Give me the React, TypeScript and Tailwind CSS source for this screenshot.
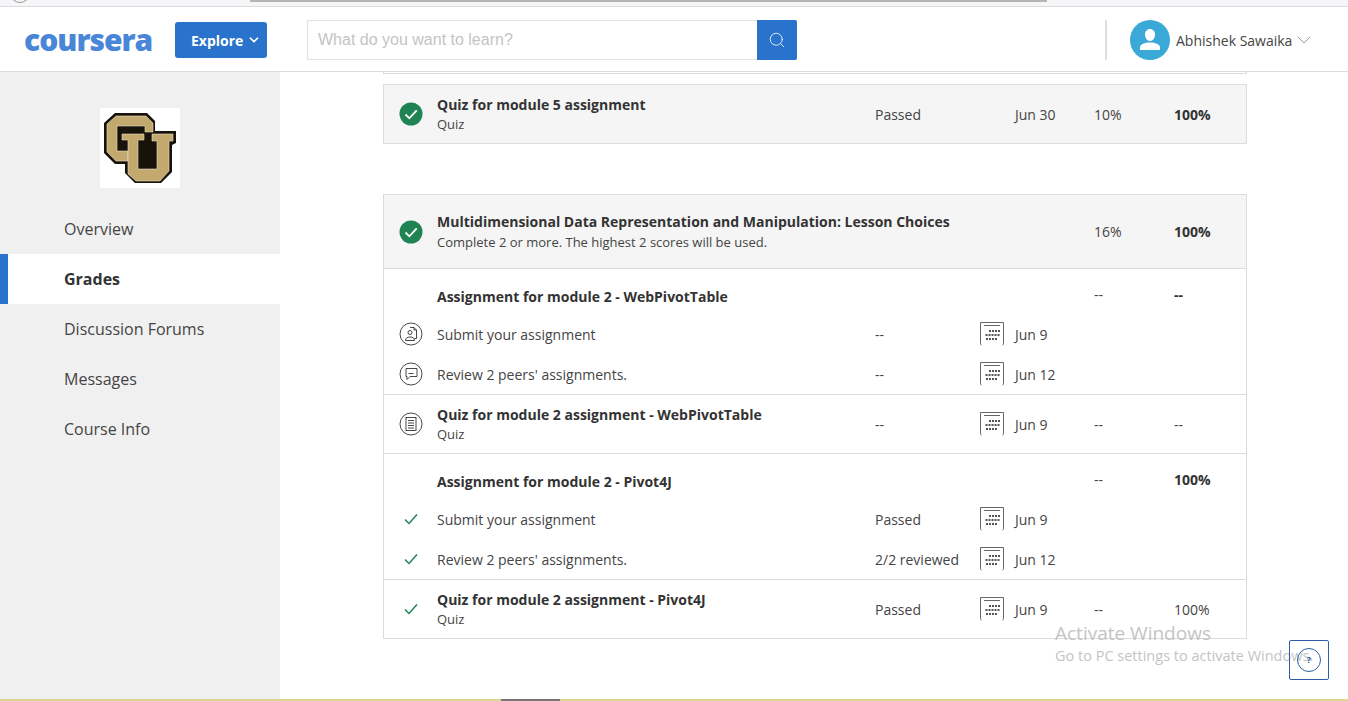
import type { ReactNode } from "react"
import { ChevronDown, Search } from "lucide-react"

function GreenCheck() {
  return (
    <svg width="24" height="24" viewBox="0 0 24 24">
      <circle cx="12" cy="12" r="11.5" fill="#1f8354" />
      <path d="M6.5 12.5l3.8 3.8 7.4-8" fill="none" stroke="#fff" strokeWidth="1.8" />
    </svg>
  )
}

function PlainCheck() {
  return (
    <svg width="24" height="24" viewBox="0 0 24 24">
      <path d="M6 12.5l4 4 8-9" fill="none" stroke="#1f8354" strokeWidth="1.5" />
    </svg>
  )
}

function SubmitIcon() {
  return (
    <svg width="24" height="24" viewBox="0 0 24 24" fill="none" stroke="#333" strokeWidth="0.9">
      <circle cx="12" cy="12" r="11" />
      <path d="M11 5.500h4l2.500 2.500v8.500h-2" />
      <path d="M15 5.500V8h2.500" />
      <circle cx="11" cy="10.500" r="2" />
      <path d="M6.500 18.500c0-2.500 2-3.500 4.500-3.500s4.500 1 4.500 3.500z" />
    </svg>
  )
}

function PeerIcon() {
  return (
    <svg width="24" height="24" viewBox="0 0 24 24" fill="none" stroke="#333" strokeWidth="0.9">
      <circle cx="12" cy="12" r="11" />
      <path d="M7 6.500h11v8h-7l-3 3v-3H7z" />
      <path d="M9.500 11.500h5" />
    </svg>
  )
}

function QuizIcon() {
  return (
    <svg width="24" height="24" viewBox="0 0 24 24" fill="none" stroke="#333" strokeWidth="0.9">
      <circle cx="12" cy="12" r="11" />
      <rect x="7" y="5.500" width="10" height="13" />
      <path d="M9 8.500h6M9 11h6M9 13.500h6M9 16h6" />
    </svg>
  )
}

function CalendarIcon() {
  const dots = [6, 9, 12, 15, 18]
  return (
    <svg width="24" height="24" viewBox="0 0 24 24" fill="none">
      <path d="M1.500 23c-1 0-1-1-1-2V0.500h23V21c0 1 0 2-1 2" stroke="#666" strokeWidth="1" />
      <path d="M4 3.500h16" stroke="#666" strokeWidth="1" />
      {dots.slice(1).map((x) => (
        <rect key={`a${x}`} x={x} y="8" width="2" height="2" fill="#555" />
      ))}
      {dots.map((x) => (
        <rect key={`b${x}`} x={x - 0.5} y="12" width="2" height="2" fill="#555" />
      ))}
      {dots.slice(0, 4).map((x) => (
        <rect key={`c${x}`} x={x} y="16" width="2" height="2" fill="#555" />
      ))}
    </svg>
  )
}

function CuLogo() {
  return (
    <svg width="80" height="80" viewBox="0 0 80 80">
      <path
        d="M15 5H47L55 13V23H76V35L72 37V64L61 75H35L25 65V56H15L4 45V15Z"
        fill="#17120a"
      />
      <path
        d="M16 8H46L53 15V24H45V18H17V43H28V53H16L7 44V16Z"
        fill="#c4a96f"
        stroke="#e8dfc6"
        strokeWidth="0.6"
      />
      <path
        d="M22 26H44V32H38V61H57V33H52V26H73V33H69V63L60 73H36L28 66V32H22Z"
        fill="#c4a96f"
        stroke="#e8dfc6"
        strokeWidth="0.6"
      />
    </svg>
  )
}

function NavItem({ label, active }: { label: string; active?: boolean }) {
  if (active) {
    return (
      <div className="flex h-[50px] items-center border-l-[8px] border-[#2a73cc] bg-white pl-[56px] text-[16px] font-bold text-[#333]">
        {label}
      </div>
    )
  }
  return <div className="flex h-[50px] items-center pl-[64px] text-[16px] text-[#444]">{label}</div>
}

type RowProps = {
  icon?: ReactNode
  title: string
  bold?: boolean
  sub?: string
  roomy?: boolean
  status?: string
  date?: string
  noCalendar?: boolean
  weight?: string
  grade?: string
  gradeBold?: boolean
  lift?: boolean
  className?: string
}

function Row({ icon, title, bold, sub, roomy, status, date, noCalendar, weight, grade, gradeBold, lift, className }: RowProps) {
  return (
    <div className={`flex items-center text-[14px] text-[#444] ${className ?? ""}`}>
      <div className="flex w-[53px] shrink-0 justify-center">{icon}</div>
      <div className={`w-[438px] shrink-0 ${sub ? "pb-[2px]" : ""}`}>
        <div className={bold ? "font-bold whitespace-nowrap text-[#333]" : ""}>{title}</div>
        {sub && <div className={`text-[13px] leading-[18px] whitespace-nowrap ${roomy ? "mt-[1px]" : ""}`}>{sub}</div>}
      </div>
      <div className="w-[105px] shrink-0">{status}</div>
      <div className="flex w-[35px] shrink-0">{date && !noCalendar && <CalendarIcon />}</div>
      <div className="w-[79px] shrink-0">{date}</div>
      <div className={`w-[80px] shrink-0 ${lift ? "pb-[4px]" : ""}`}>{weight}</div>
      <div className={`${gradeBold ? "font-bold text-[#333]" : ""} ${lift ? "pb-[4px]" : ""}`}>{grade}</div>
    </div>
  )
}

function Header() {
  return (
    <div className="flex h-[65px] items-center border-b border-[#dcdcdc] bg-white pt-[2px]">
      <div className="ml-[24px] w-[151px] text-[30px] leading-none font-extrabold tracking-[-1px] text-[#4a86d8]">coursera</div>
      <div className="flex h-[36px] w-[92px] items-center gap-[4px] rounded-[3px] bg-[#2a73cc] pl-[16px] text-[14px] font-bold text-white">
        Explore
        <ChevronDown size={14} strokeWidth={3} />
      </div>
      <div className="ml-[40px] flex h-[40px] w-[490px] border border-[#e1e1e1] [font-family:'Liberation_Sans',sans-serif]">
        <div className="flex flex-1 items-center pl-[10px] text-[16px] text-[#c4c4c4]">What do you want to learn?</div>
        <div className="-my-px -mr-px flex w-[40px] items-center justify-center rounded-r-[2px] bg-[#2a73cc]">
          <Search size={18} strokeWidth={1.1} color="#fff" />
        </div>
      </div>
      <div className="ml-[308px] h-[40px] w-[2px] bg-[#dedede]" />
      <div className="ml-[23px] flex h-[40px] w-[40px] items-center justify-center rounded-full bg-[#3aa9d8]">
        <svg width="26" height="26" viewBox="0 0 26 26" fill="#fff">
          <path d="M13 2c3.200 0 5 2.500 5 5.500S16.200 14 13 14s-5-3.500-5-6.500S9.800 2 13 2z" />
          <path d="M3 23v-2.500C3 17 8 15.500 13 15.500S23 17 23 20.500V23z" />
        </svg>
      </div>
      <div className="ml-[6px] text-[14px] text-[#444]">Abhishek Sawaika</div>
      <ChevronDown size={24} strokeWidth={0.6} color="#555" />
    </div>
  )
}

export default function App() {
  return (
    <div className="relative flex h-[701px] w-[1348px] flex-col overflow-hidden bg-white [font-family:'Open_Sans',sans-serif]">
      <div className="relative h-[7px] shrink-0 overflow-hidden border-b border-[#dcdcdc] bg-[#f6f6f8] pl-[250px]">
        <div className="h-[2px] w-[797px] bg-[#b5b5b5]" />
        <div className="absolute -top-[17px] left-[10px] h-[20px] w-[20px] rounded-full border border-[#999]" />
      </div>
      <Header />
      <div className="flex min-h-0 flex-1">
        <div className="w-[280px] shrink-0 bg-[#f0f0f0]">
          <div className="mx-auto mt-[36px] mb-[16px] flex h-[80px] w-[80px] items-center justify-center bg-white">
            <CuLogo />
          </div>
          <NavItem label="Overview" />
          <NavItem label="Grades" active />
          <NavItem label="Discussion Forums" />
          <NavItem label="Messages" />
          <NavItem label="Course Info" />
        </div>
        <div className="ml-[103px] w-[864px]">
          <div className="h-[2px] border-x border-b border-[#dcdcdc]" />
          <div className="mt-[10px] border border-[#dcdcdc] bg-[#f5f5f5]">
            <Row
              className="h-[58px]"
              icon={<GreenCheck />}
              title="Quiz for module 5 assignment"
              bold
              sub="Quiz"
              status="Passed"
              date="Jun 30"
              noCalendar
              weight="10%"
              grade="100%"
              gradeBold
            />
          </div>
          <div className="mt-[50px] border border-[#dcdcdc]">
            <Row
              className="h-[74px] border-b border-[#dcdcdc] bg-[#f5f5f5]"
              icon={<GreenCheck />}
              title="Multidimensional Data Representation and Manipulation: Lesson Choices"
              bold
              sub="Complete 2 or more. The highest 2 scores will be used."
              roomy
              weight="16%"
              grade="100%"
              gradeBold
            />
            <div className="border-b border-[#dcdcdc] pt-[15px]">
              <Row className="h-[24px]" title="Assignment for module 2 - WebPivotTable" bold weight="--" grade="--" gradeBold lift />
              <Row className="mt-[13px] h-[26px]" icon={<SubmitIcon />} title="Submit your assignment" status="--" date="Jun 9" />
              <Row className="mt-[14px] mb-[7px] h-[26px]" icon={<PeerIcon />} title="Review 2 peers' assignments." status="--" date="Jun 12" />
            </div>
            <Row
              className="h-[59px] border-b border-[#dcdcdc]"
              icon={<QuizIcon />}
              title="Quiz for module 2 assignment - WebPivotTable"
              bold
              sub="Quiz"
              status="--"
              date="Jun 9"
              weight="--"
              grade="--"
            />
            <div className="border-b border-[#dcdcdc] pt-[15px]">
              <Row className="h-[24px]" title="Assignment for module 2 - Pivot4J" bold weight="--" grade="100%" gradeBold lift />
              <Row className="mt-[13px] h-[26px]" icon={<PlainCheck />} title="Submit your assignment" status="Passed" date="Jun 9" />
              <Row className="mt-[14px] mb-[7px] h-[26px]" icon={<PlainCheck />} title="Review 2 peers' assignments." status="2/2 reviewed" date="Jun 12" />
            </div>
            <Row
              className="h-[58px]"
              icon={<PlainCheck />}
              title="Quiz for module 2 assignment - Pivot4J"
              bold
              sub="Quiz"
              status="Passed"
              date="Jun 9"
              weight="--"
              grade="100%"
            />
          </div>
        </div>
      </div>
      <div className="h-[2px] shrink-0 bg-[#d8d890] pl-[501px]">
        <div className="h-[2px] w-[59px] bg-[#777]" />
      </div>

      <div className="absolute top-[621px] left-[1055px] text-[19px] leading-[24px] whitespace-nowrap text-[#c4c4c4]">Activate Windows</div>
      <div className="absolute top-[647px] left-[1055px] text-[14.5px] leading-[18px] whitespace-nowrap text-[#c4c4c4]">Go to PC settings to activate Windows.</div>
      <div className="absolute top-[640px] left-[1289px] flex h-[40px] w-[40px] items-center justify-center rounded-[2px] border border-[#2a5fa8]">
        <div className="flex h-[24px] w-[24px] items-center justify-center rounded-full border border-[#2a5fa8] text-[9px] font-bold text-[#2a5fa8]">?</div>
      </div>
    </div>
  )
}
